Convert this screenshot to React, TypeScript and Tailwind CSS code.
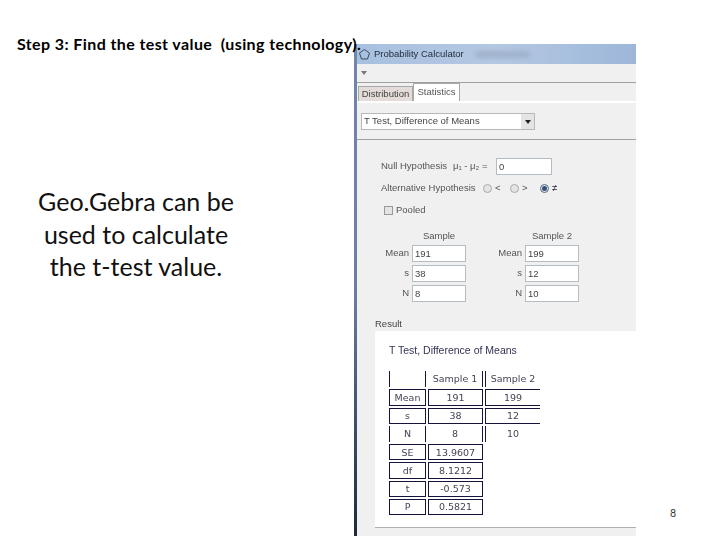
import { Fragment } from "react"

const rows = [
  { label: "Mean", a: "191", b: "199" },
  { label: "s", a: "38", b: "12" },
  { label: "N", a: "8", b: "10" },
]

const stats = [
  { label: "SE", value: "13.9607" },
  { label: "df", value: "8.1212" },
  { label: "t", value: "-0.573" },
  { label: "P", value: "0.5821" },
]

function Field({ value, className = "w-[54px]" }: { value: string; className?: string }) {
  return (
    <div className={`h-[17px] bg-white border border-[#b4bcc4] pl-[2px] text-[#444] leading-[15px] ${className}`}>{value}</div>
  )
}

function SampleForm({ title, index, labelWidth }: { title: string; index: "a" | "b"; labelWidth: string }) {
  return (
    <div className="flex flex-col items-end">
      <div className="h-[17px] w-[54px] text-center text-[#555] leading-[15px] whitespace-nowrap">{title}</div>
      <div className="flex flex-col gap-[3px]">
        {rows.map(r => (
          <div key={r.label} className="flex items-center gap-[3px]">
            <span className={`text-right text-[#555] ${labelWidth}`}>{r.label}</span>
            <Field value={r[index]} />
          </div>
        ))}
      </div>
    </div>
  )
}

function Radio({ on }: { on?: boolean }) {
  return (
    <span className={`inline-flex items-center justify-center w-[9px] h-[9px] rounded-full border ${on ? "border-[#5a6a80] bg-[#dfe6ee]" : "border-[#aaa] bg-[#e4e4e4]"}`}>
      {on && <span className="w-[5px] h-[5px] rounded-full bg-[#33507a]" />}
    </span>
  )
}

function Cell({ children, className = "" }: { children: React.ReactNode; className?: string }) {
  return (
    <div className={`h-[16.3px] flex items-center justify-center text-[#445] leading-none ${className}`}>{children}</div>
  )
}

function ResultTable() {
  const box = "border border-[#14143c]"
  return (
    <div className="grid grid-cols-[37px_55px_55px] gap-x-[2px] gap-y-[2px] text-[9.5px]" style={{ fontFamily: "'DejaVu Sans', sans-serif" }}>
      <Cell className="border-l border-r border-[#14143c]">{""}</Cell>
      <Cell className="border-r border-[#14143c]">Sample 1</Cell>
      <Cell className="border-l border-[#14143c]">Sample 2</Cell>
      {rows.map((r, i) => (
        <Fragment key={r.label}>
          <Cell className={i === 2 ? "border-l border-r border-[#14143c]" : box}>{r.label}</Cell>
          <Cell className={i === 2 ? "border-r border-[#14143c]" : box}>{r.a}</Cell>
          <Cell className={i === 2 ? "border-l border-[#14143c]" : "border-l border-t border-b border-[#14143c]"}>{r.b}</Cell>
        </Fragment>
      ))}
      {stats.map(s => (
        <Fragment key={s.label}>
          <Cell className={box}>{s.label}</Cell>
          <Cell className={box}>{s.value}</Cell>
          <div />
        </Fragment>
      ))}
    </div>
  )
}

function CalculatorWindow() {
  return (
    <div className="w-[282px] h-[492px] mt-[44px] flex blur-[0.35px] text-[9.5px] overflow-hidden" style={{ fontFamily: "'Liberation Sans', sans-serif" }}>
      <div className="w-[3px] shrink-0 bg-gradient-to-b from-[#7186aa] via-[#6a7fa2] to-[#1c2a3c]" />

      <div className="flex-1 min-w-0 flex flex-col bg-[#f0f0f0]">
        <div className="h-[20px] shrink-0 flex items-center gap-[3px] pl-[1px] bg-gradient-to-r from-[#a8c0e0] via-[#b4c8e2] to-[#9db7da] text-[#1f2a3a]">
          <svg width="13" height="13" viewBox="0 0 13 13" fill="none" stroke="#3c4c58" strokeWidth="1">
            <path d="M6.5 1.5 L11.5 5 L9.5 11 L3.5 11 L1.5 5 Z" />
          </svg>
          <span className="whitespace-nowrap text-[9.5px]">Probability Calculator</span>
          <span className="ml-[8px] w-[55px] h-[7px] rounded-sm bg-[#a0b2cc] blur-[2px]" />
        </div>

        <div className="h-[19px] shrink-0 flex items-center pl-[4px] border-b border-[#a0a0a0]">
          <span className="w-0 h-0 border-l-[3px] border-r-[3px] border-t-[4px] border-l-transparent border-r-transparent border-t-[#777]" />
        </div>

        <div className="h-[20px] shrink-0 flex items-end pl-[1px] border-b-[2px] border-white">
          <div className="h-[15px] w-[55px] flex items-center justify-center bg-[#e3dcd8] border border-b-0 border-[#a8a8a8] text-[#444] whitespace-nowrap">Distribution</div>
          <div className="h-[18px] w-[47px] flex items-center justify-center bg-white border border-b-0 border-[#a8a8a8] text-[#555] whitespace-nowrap">Statistics</div>
        </div>

        <div className="h-[37px] shrink-0 pt-[10px] pl-[4px] border-b border-[#a0a0a0]">
          <div className="w-[174px] h-[17px] flex items-center justify-between bg-white border border-[#b8b8b8] pl-[2px] text-[#444]">
            <span className="whitespace-nowrap">T Test, Difference of Means</span>
            <span className="w-[13px] h-full flex items-center justify-center bg-[#e4e4e4]">
              <span className="w-0 h-0 border-l-[3px] border-r-[3px] border-t-[4px] border-l-transparent border-r-transparent border-t-[#222]" />
            </span>
          </div>
        </div>

        <div className="flex flex-col pl-[24px] pt-[17px] text-[#555]">
          <div className="h-[18px] flex items-center whitespace-nowrap">
            <span className="w-[72px]">Null Hypothesis</span>
            <span className="w-[43px]">μ₁ - μ₂ =</span>
            <Field value="0" className="w-[56px]" />
          </div>
          <div className="h-[20px] mt-[3px] flex items-center whitespace-nowrap">
            <span className="w-[102px]">Alternative Hypothesis</span>
            <Radio /><span className="w-[18px] pl-[3px]">&lt;</span>
            <Radio /><span className="w-[21px] pl-[3px]">&gt;</span>
            <Radio on /><span className="pl-[3px] text-[#223]">≠</span>
          </div>
          <div className="h-[15px] mt-[5px] flex items-center gap-[3px] pl-[3px]">
            <span className="w-[9px] h-[9px] border border-[#999] bg-[#e4e4e4]" />
            <span>Pooled</span>
          </div>
        </div>

        <div className="flex pl-[25px] pt-[10px] gap-[29px]">
          <SampleForm title="Sample" index="a" labelWidth="w-[27px]" />
          <SampleForm title="Sample 2" index="b" labelWidth="w-[27px]" />
        </div>

        <div className="pl-[18px] pt-[15px] h-[29px] text-[#444] leading-[14px]">Result</div>

        <div className="ml-[18px] h-[197px] bg-white border-b border-[#b0b0b0]">
          <div className="pl-[14px] pt-[12px] text-[10.5px] text-[#335] leading-[14px] whitespace-nowrap">T Test, Difference of Means</div>
          <div className="pl-[14px] pt-[14px]">
            <ResultTable />
          </div>
        </div>
      </div>
    </div>
  )
}

export default function App() {
  return (
    <div className="relative w-[720px] h-[540px] bg-white flex overflow-hidden" style={{ fontFamily: "Lato, 'Open Sans', sans-serif" }}>
      <h2 className="absolute left-[17px] top-[35px] z-10 text-[16px] tracking-[0.4px] font-bold text-black whitespace-pre leading-[18px]">Step 3: Find the test value  (using technology).</h2>

      <div className="w-[354px] shrink-0 pt-[185px] pl-[27px] box-border">
        <p className="w-[218px] text-center text-[25px] leading-[32.5px] text-[#111]">Geo.Gebra can be used to calculate the t-test value.</p>
      </div>

      <CalculatorWindow />

      <div className="flex-1 flex items-end justify-end pb-[18px] pr-[44px] text-[10.5px] text-[#333]">8</div>
    </div>
  )
}
